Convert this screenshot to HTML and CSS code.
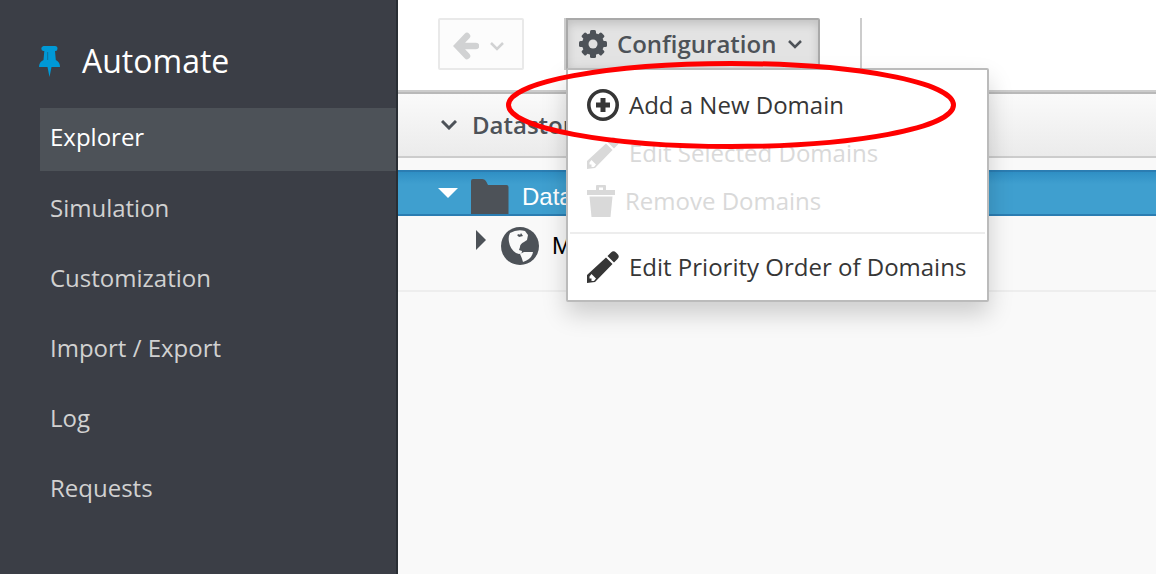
FILE: index.html
```html
<!DOCTYPE html>
<html lang="en">
<head>
<meta charset="utf-8">
<title>Automate</title>
<link rel="stylesheet" href="styles.css">
</head>
<body>
<div class="app">
  <aside class="sidebar">
    <h1 class="title">
      <svg class="pin" viewBox="0 0 22 31" width="22" height="31" aria-hidden="true"><path fill="#0099d6" d="M4.500 0h11.500q2.500 0 2.500 2.500T16.500 5h-.5l.8 9q4.200 2 4.200 7h-8.500l-2 10-2-10H0q0-5 4.500-7l.8-9h-1q-2-.5-2-2.500t2.200-2.500z"/><path fill="#0b76a3" d="M8 6h1.200v8H8z"/></svg>
      <span>Automate</span>
    </h1>
    <nav class="nav">
      <a class="nav-item active" href="#">Explorer</a>
      <a class="nav-item" href="#">Simulation</a>
      <a class="nav-item" href="#">Customization</a>
      <a class="nav-item" href="#">Import / Export</a>
      <a class="nav-item" href="#">Log</a>
      <a class="nav-item" href="#">Requests</a>
    </nav>
  </aside>
  <main class="main">
    <div class="toolbar">
      <button class="btn back" type="button" aria-label="Back" disabled>
        <svg viewBox="0 0 26 28" width="26" height="28" aria-hidden="true"><path fill="none" stroke="#d1d2d3" stroke-width="6.500" stroke-linecap="round" stroke-linejoin="miter" d="M23 14H6M14 4 4.500 14l9.500 10"/></svg>
        <svg viewBox="0 0 14 9" width="14" height="9" aria-hidden="true"><path fill="none" stroke="#d1d2d3" stroke-width="2.500" d="m1 1 6 6 6-6"/></svg>
      </button>
      <div class="config-group">
        <button class="btn config" type="button" aria-expanded="true">
          <svg viewBox="0 0 28 28" width="28" height="28" aria-hidden="true"><g fill="#4d5258"><g id="teeth"><rect x="11" y="0" width="6" height="28" rx="1.500"/><rect x="0" y="11" width="28" height="6" rx="1.500"/></g><use href="#teeth" transform="rotate(45 14 14)"/><circle cx="14" cy="14" r="11"/></g><circle cx="14" cy="14" r="4.500" fill="#e0e0e0"/></svg>
          <span>Configuration</span>
          <svg class="caret" viewBox="0 0 14 9" width="14" height="9" aria-hidden="true"><path fill="none" stroke="#4d5258" stroke-width="2.500" d="m1 1 6 6 6-6"/></svg>
        </button>
        <div class="menu">
          <button class="menu-item" type="button">
            <svg viewBox="0 0 32 32" width="32" height="32" aria-hidden="true"><circle cx="16" cy="16" r="14.200" fill="none" stroke="#363636" stroke-width="3.600"/><path fill="#363636" d="M13.500 9h5v4.500H23v5h-4.500V23h-5v-4.500H9v-5h4.500z"/></svg>
            <span>Add a New Domain</span>
          </button>
          <button class="menu-item" type="button" disabled>
            <svg viewBox="0 0 32 32" width="32" height="32" aria-hidden="true"><path fill="currentColor" fill-rule="evenodd" d="M0 32v-8L19 6.500l6.500 6.500L8 31zM2.500 25.500v2h2v2.500h2.500L9 27.500 4.500 23zM20.500 5 24 1.500q2.500-2.500 5 0l1.500 1.500q2.500 2.500 0 5L27 11.500z"/></svg>
            <span>Edit Selected Domains</span>
          </button>
          <button class="menu-item" type="button" disabled>
            <svg viewBox="0 0 28 32" width="28" height="32" aria-hidden="true"><path fill="currentColor" fill-rule="evenodd" d="M10 0h8q1 0 1 1v4h9v5H0V5h9V1q0-1 1-1zm2 2.500V5h4V2.500zM2.500 11.500h23L23.500 32h-19z"/></svg>
            <span>Remove Domains</span>
          </button>
          <hr class="menu-rule">
          <button class="menu-item" type="button">
            <svg viewBox="0 0 32 32" width="32" height="32" aria-hidden="true"><path fill="currentColor" fill-rule="evenodd" d="M0 32v-8L19 6.500l6.500 6.500L8 31zM2.500 25.500v2h2v2.500h2.500L9 27.500 4.500 23zM20.500 5 24 1.500q2.500-2.500 5 0l1.500 1.500q2.500 2.500 0 5L27 11.500z"/></svg>
            <span>Edit Priority Order of Domains</span>
          </button>
        </div>
        <svg class="highlight" viewBox="0 0 450 88" width="450" height="88" aria-hidden="true"><ellipse cx="225" cy="44" rx="222.500" ry="41.500" fill="none" stroke="#f00" stroke-width="5"/></svg>
      </div>
      <div class="separator"></div>
    </div>
    <h2 class="panel-head">
      <svg viewBox="0 0 16 10" width="16" height="10" aria-hidden="true"><path fill="none" stroke="#4d5258" stroke-width="3" d="m1 1 7 7 7-7"/></svg>
      <span>Datastore</span>
    </h2>
    <div class="tree">
      <div class="tree-row selected">
        <svg class="arrow-open" viewBox="0 0 20 10" width="20" height="10" aria-hidden="true"><path fill="#fff" d="M0 0h20L10 10z"/></svg>
        <svg viewBox="0 0 38 35" width="38" height="35" aria-hidden="true"><path fill="#4d5258" d="M0 35V2q0-2 2-2h9q3 0 4.500 3L17 6h18.500q2 0 2 2v27z"/></svg>
        <span>Datastore</span>
      </div>
      <div class="tree-row child">
        <svg class="arrow-closed" viewBox="0 0 10 20" width="10" height="20" aria-hidden="true"><path fill="#4d5258" d="M0 0v20l10-10z"/></svg>
        <svg viewBox="0 0 38 38" width="38" height="38" aria-hidden="true"><circle cx="19" cy="19" r="19" fill="#4d5258"/><path fill="#f9f9f9" d="M9 6q7-4 15-2l3 4-1 5-3 2q-4 2-4 5l-1 3 3 1q0 3-3 3l-3-1q-6-4-7-11-1-5 1-9zM19 27l4-2 9 0q-1 7-10 10-1-4-3-8z"/><path fill="#4d5258" d="m16 8 2-1 1 1 1-2 2 3-4 1z"/></svg>
        <span>ManageIQ</span>
      </div>
    </div>
  </main>
</div>
</body>
</html>
```
FILE: styles.css
```css
* { box-sizing: border-box; }
body { margin: 0; font-family: "Open Sans", "Noto Sans", sans-serif; font-size: 24px; line-height: 32px; }
svg { display: block; flex: none; }
button { font: inherit; color: inherit; }

.app { display: grid; grid-template-columns: 398px minmax(0, 1fr); min-height: 100vh; overflow: hidden; }

.sidebar { background: #3b3e46; border-right: 2px solid #292e34; padding: 39px 0 0 39px; }
.title { display: flex; align-items: center; gap: 21px; margin: 0 0 25px; font-size: 32px; line-height: 44px; font-weight: 400; color: #fff; }
.nav { display: flex; flex-direction: column; gap: 8px; margin-left: 1px; }
.nav-item { padding: 13px 10px 17px; color: #d1d1d1; text-decoration: none; }
.nav-item.active { padding-bottom: 18px; background: #4d5258; color: #fff; }

.main { background: #f9f9f9; }
.toolbar { display: flex; align-items: flex-start; height: 92px; padding: 18px 40px 0; background: #fff; border-bottom: 2px solid #ccc; }
.btn { display: flex; align-items: center; height: 52px; border: 2px solid #e9e9e9; border-radius: 2px; }
.back { gap: 11px; padding: 4px 18px 0 13px; margin-right: 40px; background: #fcfcfc; }
.config-group { position: relative; z-index: 1; border-left: 2px solid #ccc; }
.config { gap: 10px; padding: 0 16px 0 11px; border-color: #a9a9a9; border-radius: 0 2px 2px 0; background: #e3e3e3; color: #4d5258; font-weight: 600; box-shadow: inset 0 4px 10px rgba(0, 0, 0, .15); }
.config .caret { margin-left: 2px; }
.separator { width: 2px; height: 52px; margin-left: 40px; background: #ccc; }

.menu { position: absolute; top: 50px; left: 0; padding: 11px 0 9px; white-space: nowrap; background: #fff; border: 2px solid #bbb; border-radius: 2px; box-shadow: 0 12px 24px rgba(0, 0, 0, .18); }
.menu-item { display: flex; align-items: center; gap: 10px; width: 100%; height: 48px; padding: 0 21px 0 19px; border: 0; background: none; color: #363636; }
.menu-item:disabled { color: #d9d9d9; }
.menu-rule { height: 2px; margin: 7px 2px 9px; border: 0; background: #ededed; }
.highlight { position: absolute; top: 43px; left: -60px; pointer-events: none; }

.panel-head { display: flex; align-items: center; gap: 15px; height: 66px; margin: 0; padding: 0 43px; font-size: 24px; font-weight: 600; color: #4d5258; background: linear-gradient(#fafafa, #ebebeb); border-top: 2px solid #b9b9b9; border-bottom: 2px solid #ccc; }
.tree { margin-top: 12px; font-family: "Liberation Sans", Arial, sans-serif; font-size: 24px; }
.tree-row { display: flex; align-items: center; }
.selected { height: 46px; padding: 7px 40px 0; gap: 13px; color: #fff; background: linear-gradient(#2f8fc4, #3f9fcf 12px); border-top: 2px solid #2b7db2; border-bottom: 2px solid #2b7db2; }
.arrow-open { margin: 0 0 8px; }
.child { height: 76px; padding: 0 78px 14px; gap: 13px; color: #000; border-bottom: 2px solid #eee; }
.arrow-closed { margin: 0 2px 12px 0; }
```
